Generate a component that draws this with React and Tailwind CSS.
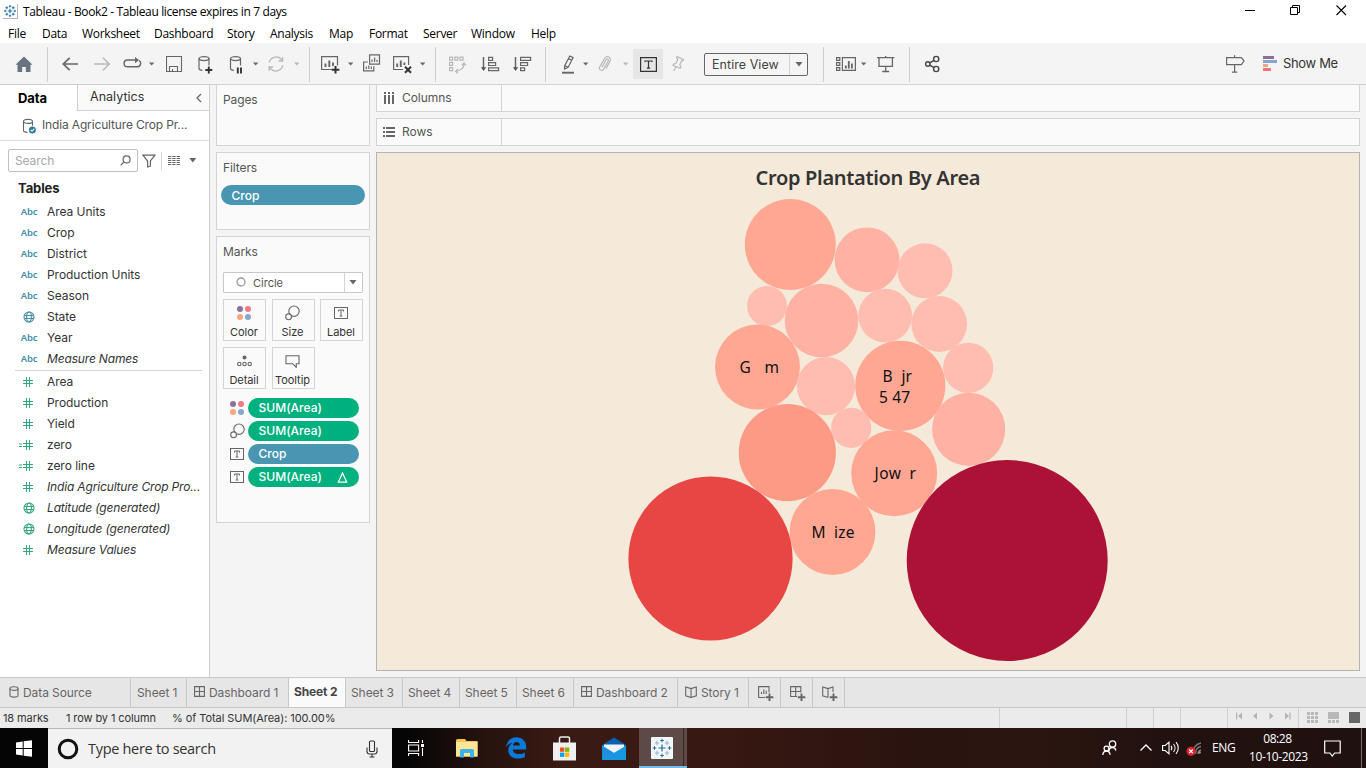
import React from "react";

const ui = "font-['Inter',sans-serif]";
const sys = "font-['Open_Sans',sans-serif]";

/* ---------- shared pieces ---------- */

function Icon({ w, h = 20, children, className = "", ...rest }) {
  return (
    <svg width={w} height={h} viewBox={`0 0 ${w} ${h}`} fill="none" stroke="#666" strokeWidth="1.2" className={`block shrink-0 ${className}`} {...rest}>
      {children}
    </svg>
  );
}

function Slot({ w, children }) {
  return <div className={`flex shrink-0 items-center ${w}`}>{children}</div>;
}

const Sep = ({ w }) => (
  <Slot w={w}>
    <div className="h-[35px] w-px bg-[#cfcfcf]" />
  </Slot>
);

const Caret = ({ w, light }) => (
  <Slot w={w}>
    <Icon w={6} h={4} stroke="none">
      <path d="M0 0.5h5.4L2.7 3.5z" fill={light ? "#b8b8b8" : "#666"} />
    </Icon>
  </Slot>
);

function TableauMark({ size, main = "#1f6f97", soft = "#5d9cc0", weight = 1 }) {
  const plus = (x, y, r, c, sw) => <path key={`${x}-${y}`} d={`M${x - r} ${y}h${2 * r}M${x} ${y - r}v${2 * r}`} stroke={c} strokeWidth={sw * weight} />;
  return (
    <svg width={size} height={size} viewBox="0 0 22 22" fill="none" className="block shrink-0">
      {plus(11, 11, 3.6, main, 1.2)}
      {plus(6, 6, 2.2, soft, 1.1)}
      {plus(16, 6, 2.2, soft, 1.1)}
      {plus(6, 16, 2.2, soft, 1.1)}
      {plus(16, 16, 2.2, soft, 1.1)}
      {plus(11, 3.5, 1.8, main, 1)}
      {plus(11, 18.5, 1.8, main, 1)}
      {plus(3.5, 11, 1.8, main, 1)}
      {plus(18.5, 11, 1.8, main, 1)}
    </svg>
  );
}

function LabelIcon({ w = 14, h = 12, stroke = "#666" }) {
  const c = w / 2;
  return (
    <svg width={w} height={h} viewBox={`0 0 ${w} ${h}`} fill="none" stroke={stroke} className="block shrink-0">
      <rect x="0.5" y="0.5" width={w - 1} height={h - 1} />
      <path d={`M${c - 2.5} 4.5v-1.5h5v1.5M${c} 3v${h - 6}M${c - 1.3} ${h - 3}h2.6`} />
    </svg>
  );
}

function ColorIcon() {
  return (
    <svg width="14" height="14" viewBox="0 0 14 14" className="block shrink-0">
      <circle cx="3" cy="3" r="3" fill="#8c7299" />
      <circle cx="11" cy="3" r="3" fill="#fa7787" />
      <circle cx="3" cy="11" r="3" fill="#f6a77c" />
      <circle cx="11" cy="11" r="3" fill="#84a6cf" />
    </svg>
  );
}

const SizeIcon = () => (
  <Icon w={15} h={16} stroke="#666" strokeWidth="1.1">
    <circle cx="9" cy="6.2" r="5.2" />
    <circle cx="3.6" cy="11.8" r="2.9" fill="#fafafa" />
  </Icon>
);

/* ---------- window chrome ---------- */

function TitleBar() {
  return (
    <div className={`flex h-[23px] items-center bg-white text-black ${sys}`}>
      <div className="ml-[3px] flex h-[15px] w-[15px] items-center justify-center border-r border-b border-[#b5b5b5]">
        <TableauMark size={14} main="#1f6f9c" soft="#1f6f9c" weight={1.5} />
      </div>
      <span className="ml-[5px] text-[12px] tracking-[-0.36px] whitespace-pre">Tableau - Book2 - Tableau license expires in 7 days</span>
      <div className="mb-[3px] ml-auto flex items-center">
        <Icon w={45} h={20} stroke="#000" strokeWidth="1"><path d="M0 10.5h10" /></Icon>
        <Icon w={46} h={20} stroke="#000" strokeWidth="1"><path d="M.5 7.5h7v7h-7zM2.500 7.500v-2h7v7h-2" /></Icon>
        <Icon w={30} h={20} stroke="#000" strokeWidth="1.1"><path d="M.5 5.5l9.5 9.5M10 5.5L.5 15" /></Icon>
      </div>
    </div>
  );
}

const MENU = [
  ["File", "w-[34px]"], ["Data", "w-[40px]"], ["Worksheet", "w-[72px]"], ["Dashboard", "w-[73px]"], ["Story", "w-[43px]"],
  ["Analysis", "w-[59px]"], ["Map", "w-[40px]"], ["Format", "w-[54px]"], ["Server", "w-[48px]"], ["Window", "w-[60px]"], ["Help", "w-[40px]"],
];

function MenuBar() {
  return (
    <div className={`flex h-5 items-center bg-white pt-0.5 pl-2 text-[12px] tracking-[-0.28px] text-black ${sys}`}>
      {MENU.map(([t, w]) => <div key={t} className={`shrink-0 ${w}`}>{t}</div>)}
    </div>
  );
}

function Toolbar() {
  return (
    <div className="flex h-[42px] items-center border-b border-[#cfcfcf] bg-[#f4f4f4] pt-px pl-[15px]">
      <Slot w="w-8">
        <Icon w={18} stroke="none"><path d="M9 2.5L.5 10.8h2V18h4.7v-5h3.6v5h4.7v-7.2h2z" fill="#68737f" /></Icon>
      </Slot>
      <Sep w="w-[15px]" />
      <Slot w="w-8"><Icon w={17} strokeWidth="1.7"><path d="M16 10H1.3M7.7 3.8L1.3 10l6.4 6.2" /></Icon></Slot>
      <Slot w="w-[29px]"><Icon w={17} stroke="#b8b8b8" strokeWidth="1.6"><path d="M0 10h15.2M9 3.8l6.3 6.2L9 16.2" /></Icon></Slot>
      <Slot w="w-[26px]">
        <Icon w={19} strokeWidth="1.4"><path d="M8 6H4.500a3.400 3.400 0 0 0 0 6.800h9.500c4 0 4.800-4.800 2-6.200M5 6h8" /><path d="M12 3l4 3-4 3.200z" fill="#666" stroke="none" /></Icon>
      </Slot>
      <Caret w="w-[17px]" />
      <Slot w="w-[31px]"><Icon w={17} strokeWidth="1.1"><path d="M.5 2.5h15v15H.5zM3.5 17.5v-5h8v5M6.5 17.5v-2.5" /></Icon></Slot>
      <Slot w="w-8">
        <Icon w={18}>
          <ellipse cx="7" cy="4.6" rx="5" ry="2" /><path d="M2 4.6v9.8c0 1.1 1.4 1.7 3.4 1.9M12 4.6v7" />
          <path d="M11.8 12.5v7M8.3 16h7" stroke="#333" strokeWidth="1.9" />
        </Icon>
      </Slot>
      <Slot w="w-6">
        <Icon w={18}>
          <ellipse cx="6.5" cy="4.6" rx="5" ry="2" /><path d="M1.5 4.6v9.8c0 1.1 1.4 1.7 3.4 1.9M11.5 4.6v7" />
          <path d="M8.8 13.5v6M12 13.5v6" stroke="#333" strokeWidth="1.9" />
        </Icon>
      </Slot>
      <Caret w="w-[14px]" />
      <Slot w="w-[27px]">
        <Icon w={18} stroke="#b8b8b8" strokeWidth="1.3">
          <path d="M2.2 8.6A7 7 0 0 1 14 5l1.4 1.8M15.8 11.2A7 7 0 0 1 4 15l-1.5-1.8M15.6 3v4h-4M2.2 17v-4h4" />
        </Icon>
      </Slot>
      <Caret w="w-[15px]" light />
      <Sep w="w-3" />
      <Slot w="w-[27px]">
        <Icon w={20}>
          <path d="M11 15.5H.6V2.6h15.9v9" /><path d="M4.5 13V9.5M8.3 13V6.5M12 12V8.5" strokeWidth="1.9" />
          <path d="M14.5 12v7.4M10.8 15.7h7.6" stroke="#333" strokeWidth="2" />
        </Icon>
      </Slot>
      <Caret w="w-[15px]" />
      <Slot w="w-[30px]">
        <Icon w={18}>
          <path d="M6.6.8h9.9v9.4H6.6z M4.8 8H.6v8.8h10.2v-4.6" /><path d="M9 8V5.5M11.6 8V3.5M14 8V5.8M3.3 15v-2.5M5.8 15v-3.5M8.3 15v-2.5" />
        </Icon>
      </Slot>
      <Slot w="w-[27px]">
        <Icon w={20}>
          <path d="M10 15.5H.6V2.6h15v8.5" /><path d="M4.2 13V9.5M7.8 13V6.5M11.4 11V8.5" strokeWidth="1.9" />
          <path d="M12 12.7l6 6M18 12.7l-6 6" stroke="#333" strokeWidth="2" />
        </Icon>
      </Slot>
      <Caret w="w-[15px]" />
      <Sep w="w-[14px]" />
      <Slot w="w-8">
        <Icon w={18} stroke="#b8b8b8">
          <path d="M.6 3.2h3v3h-3zM5.8 3.2h3v3h-3zM11 3.2h3v3h-3zM.6 8.4h3v3h-3zM.6 13.6h3v3h-3zM15 9.5c.2 4-2.8 7.2-8 7.8M12.8 11.5L15 9l2 2.5M9 15l-2.5 2.4L9 19.3" />
        </Icon>
      </Slot>
      <Slot w="w-8">
        <Icon w={19}><path d="M2.5 3v12" strokeWidth="1.5" /><path d="M0 13.2h5.2L2.6 17z" fill="#555" stroke="none" /><path d="M7.6 3.4h4v2.9h-4zM7.6 8.6h7v2.9h-7zM7.6 13.8h10v2.9h-10z" /></Icon>
      </Slot>
      <Slot w="w-8">
        <Icon w={19}><path d="M2.5 3v12" strokeWidth="1.5" /><path d="M0 13.2h5.2L2.6 17z" fill="#555" stroke="none" /><path d="M7.6 3.4h10v2.9h-10zM7.6 8.6h7v2.9h-7zM7.6 13.8h4v2.9h-4z" /></Icon>
      </Slot>
      <Sep w="w-4" />
      <Slot w="w-[22px]">
        <Icon w={14}><path d="M8.8 2l3.3 1.6-5 9.8-3.6 1.6.2-3.4zM7.5 4.5l3.2 1.7M3.8 11.4l3.2 1.8" /><path d="M1 18.7h12" strokeWidth="1.9" /></Icon>
      </Slot>
      <Caret w="w-[15px]" />
      <Slot w="w-[25px]">
        <Icon w={16} stroke="#b8b8b8"><path d="M4.8 12.8l4-7.3c.8-1.5 3-.6 2.3 1l-4.6 8.3c-1.6 2.7-5.3.6-4-2.1L7.5 4c2-3.4 7.2-1 5.3 2.8l-4 7.5" transform="translate(-.8 .3)" /></Icon>
      </Slot>
      <Caret w="w-[10px]" light />
      <Slot w="w-[38px]">
        <div className="flex h-[30px] w-[30px] items-center justify-center bg-[#e6e6e6]">
          <Icon w={17} h={15} stroke="#333"><path d="M.6.6h15.8v13.8H.6z" /><path d="M5 5V4h7v1M8.5 4v7.2M6.8 11.2h3.4" /></Icon>
        </div>
      </Slot>
      <Slot w="w-[33px]">
        <Icon w={15} stroke="#b8b8b8"><path d="M6 2.5l6.5 3-.4 1.2-1.3-.2-2 4.2 1 2.4-.5 1.2L2 11.5l.5-1.2 2.4-.8 2-4.3-1.1-1.2zM5 13L2.7 17" /></Icon>
      </Slot>
      <Slot w="w-[119px]">
        <div className={`flex h-[23px] w-[104px] rounded-[2px] border border-[#666] bg-[#f5f5f5] ${ui}`}>
          <div className="flex-1 pl-[7px] text-[12.5px] leading-[21px] tracking-[0.05px] whitespace-nowrap text-[#444]">Entire View</div>
          <div className="flex w-[18px] items-center justify-center border-l border-[#d4d4d4]">
            <Icon w={8} h={5} stroke="none"><path d="M0.5 0h7L4 4.5z" fill="#666" /></Icon>
          </div>
        </div>
      </Slot>
      <Sep w="w-[13px]" />
      <Slot w="w-[25px]">
        <Icon w={21}><path d="M.6 3.6h3.2v2.8H.6zM.6 8.6h3.2v2.8H.6zM.6 13.6h3.2v2.8H.6zM6.4 3.6h13v12.8h-13z" /><path d="M9.8 14.5v-3M12.8 14.5V7M15.9 14.5V9.5" strokeWidth="1.8" /></Icon>
      </Slot>
      <Caret w="w-4" />
      <Slot w="w-8"><Icon w={18}><path d="M0 3.6h17.4M2 3.6v8.8h13.4V3.6M8.7 2v1.5M8.7 12.5v5M5.2 17.5h7" strokeWidth="1.3" /></Icon></Slot>
      <Sep w="w-4" />
      <Icon w={15} stroke="#444" strokeWidth="1.4"><circle cx="2.8" cy="10" r="2.2" /><circle cx="11.2" cy="5" r="2.6" /><circle cx="11.2" cy="15" r="2.6" /><path d="M4.8 8.9L9 6.3M4.8 11.2L9 13.7" /></Icon>
      <div className="ml-auto flex items-center">
        <Slot w="w-[37px]"><Icon w={19}><path d="M.6 3.6h14.8l2.6 3.5-2.6 3.5H.6zM8.6 1.2v2.4M8.6 10.6v7.6M6 18.2h5.2" /></Icon></Slot>
        <Slot w="w-5">
          <Icon w={15} h={16} stroke="none"><path d="M0 0h11v3H0z" fill="#8a7099" /><path d="M0 4h14v3H0z" fill="#83a5ce" /><path d="M0 8h5v3H0z" fill="#f3a77e" /><path d="M0 12h8v3H0z" fill="#fa7284" /></Icon>
        </Slot>
        <div className={`w-[83px] text-[13px] tracking-[-0.35px] whitespace-nowrap text-[#333] ${ui}`}>Show Me</div>
      </div>
    </div>
  );
}

/* ---------- data pane ---------- */

const Abc = () => <span className="pt-0.5 text-[9.5px] font-semibold tracking-[-0.15px] text-[#4690a9] font-['Noto_Sans',sans-serif]">Abc</span>;

const Globe = ({ color }) => (
  <Icon w={12} h={12} stroke={color} strokeWidth="1.1" className="-ml-px"><circle cx="6" cy="6" r="5" /><ellipse cx="6" cy="6" rx="2.4" ry="5" /><path d="M1.500 4.500h9M1.500 7.500h9" /></Icon>
);

const Hash = ({ calc }) => (
  <Icon w={15} h={12} stroke="#34a77f" strokeWidth="1.1" className="-ml-[5px]">
    <path d="M7.5 1v10M10.500 1v10M4 4.500h10M4 7.500h10" />
    {calc && <path d="M0 5h3M0 7.5h3" />}
  </Icon>
);

const DIMENSIONS = [["Area Units"], ["Crop"], ["District"], ["Production Units"], ["Season"], ["State", "geo"], ["Year"], ["Measure Names", "abc", true]];
const MEASURES = [["Area"], ["Production"], ["Yield"], ["zero", "calc"], ["zero line", "calc"], ["India Agriculture Crop Pro...", "", true], ["Latitude (generated)", "geo", true], ["Longitude (generated)", "geo", true], ["Measure Values", "", true]];

function Field({ name, icon, italic }) {
  return (
    <div className="flex h-[21px] items-center">
      <div className="flex w-[58px] shrink-0 justify-center">{icon}</div>
      <span className={`-ml-[11px] text-[12px] whitespace-nowrap text-[#333] ${italic ? "tracking-[-0.16px] italic" : "tracking-[-0.04px]"}`}>{name}</span>
    </div>
  );
}

function DataPane() {
  return (
    <div className={`flex w-[210px] shrink-0 flex-col border-r border-[#cfcfcf] bg-white ${ui}`}>
      <div className="flex h-[26px]">
        <div className="w-[77px] pl-[18px] text-[13px] leading-[26px] font-bold tracking-[-0.1px] text-black">Data</div>
        <div className="flex flex-1 items-center border-b border-l border-[#cfcfcf] bg-[#fafafa] pl-3">
          <span className="text-[12.5px] tracking-[0.02px] text-[#333]">Analytics</span>
          <Icon w={6} h={10} className="mr-[7px] ml-auto" strokeWidth="1.3"><path d="M5 1L1 5l4 4" /></Icon>
        </div>
      </div>
      <div className="flex h-[30px] items-center border-b border-[#dcdcdc] pl-[22px]">
        <Icon w={15} h={16} strokeWidth="1.1">
          <ellipse cx="6" cy="3.4" rx="4.5" ry="2" /><path d="M1.5 3.4v9.2c0 1 1.4 1.7 4 1.8M10.5 3.4v4.4" />
          <circle cx="10.4" cy="12" r="3.5" fill="#2f7d9d" stroke="none" /><path d="M8.7 12l1.3 1.3 2.2-2.4" stroke="#fff" />
        </Icon>
        <span className="ml-[5px] pb-px text-[12px] tracking-[-0.15px] whitespace-nowrap text-[#555]">India Agriculture Crop Pr...</span>
      </div>
      <div className="mt-2 flex h-[23px] items-center pl-2">
        <div className="flex h-[23px] w-[130px] items-center rounded-[2px] border border-[#c0c0c0] pr-1.5 pl-1.5">
          <span className="text-[12px] tracking-[-0.1px] text-[#a8a8a8]">Search</span>
          <Icon w={11} h={11} className="ml-auto" strokeWidth="1.2"><circle cx="6.6" cy="4.4" r="3.5" /><path d="M4 7L.6 10.4" /></Icon>
        </div>
        <Icon w={14} h={14} className="ml-1" strokeWidth="1.2"><path d="M.9 1.2h12L8.4 7v5l-2.8 1V7z" /></Icon>
        <div className="ml-[5px] h-[18px] w-px bg-[#d4d4d4]" />
        <Icon w={12} h={11} className="ml-[6px]" strokeWidth="1"><path d="M0 1.500h12M0 3.500h12M0 5.500h12M0 7.500h12M0 9.500h12" strokeDasharray="3.300 1" /></Icon>
        <Icon w={8} h={5} className="ml-[9px]" stroke="none"><path d="M.3 0h7L3.8 4.6z" fill="#666" /></Icon>
      </div>
      <div className="mt-[7px] h-[22px] pl-[18px] text-[13px] leading-[18px] font-bold tracking-[-0.1px] text-[#222]">Tables</div>
      {DIMENSIONS.map(([n, k, it]) => <Field key={n} name={n} italic={it} icon={k === "geo" ? <Globe color="#4690a9" /> : <Abc />} />)}
      <div className="mt-px mr-[7px] ml-[15px] h-px shrink-0 bg-[#d4d4d4]" />
      {MEASURES.map(([n, k, it]) => <Field key={n} name={n} italic={it} icon={k === "geo" ? <Globe color="#34a77f" /> : <Hash calc={k === "calc"} />} />)}
    </div>
  );
}

/* ---------- cards and shelves ---------- */

const CARD = "border border-[#d4d4d4] bg-[#fafafa]";

function Pill({ label, color, w, delta }) {
  return (
    <div className={`flex h-5 items-center rounded-full pl-[10.5px] text-[12px] font-medium tracking-[0.02px] text-white ${color} ${w}`}>
      {label}
      {delta && <Icon w={11} h={11} stroke="#fff" className="mr-[11px] ml-auto"><path d="M5.5 1L1.300 10.200h8.400z" /></Icon>}
    </div>
  );
}

function MarkButton({ label, icon }) {
  return (
    <div className="flex h-[42px] w-[43px] flex-col items-center border border-[#d4d4d4] pt-[5px] pr-px text-[11px] text-[#333]">
      <div className="flex h-4 items-center">{icon}</div>
      <div className="mt-[3px] leading-4 tracking-[-0.05px] whitespace-nowrap">{label}</div>
    </div>
  );
}

function Cards() {
  return (
    <div className={`flex w-[154px] shrink-0 flex-col gap-1.5 text-[12px] text-[#555] ${ui}`}>
      <div className={`h-[62px] pt-1.5 pl-1.5 leading-[17px] tracking-[-0.1px] ${CARD}`}>Pages</div>
      <div className={`h-[78px] pt-1.5 leading-[17px] ${CARD}`}>
        <div className="pl-1.5 tracking-[-0.1px]">Filters</div>
        <div className="mt-[9px] pl-1"><Pill label="Crop" color="bg-[#4996b2]" w="w-36" /></div>
      </div>
      <div className={`h-[287px] pt-1.5 ${CARD}`}>
        <div className="pl-1.5 leading-[17px] tracking-[-0.1px]">Marks</div>
        <div className="mt-3 ml-1.5 flex h-[21px] w-[140px] rounded-[1px] border border-[#c8c8c8] bg-white">
          <Icon w={10} h={10} stroke="#999" className="mt-1 ml-3" strokeWidth="1.3"><circle cx="5" cy="5" r="4" /></Icon>
          <span className="ml-[7px] text-[11px] leading-[20px]">Circle</span>
          <div className="ml-auto flex w-[18px] items-center justify-center border-l border-[#d4d4d4] pr-px">
            <Icon w={8} h={5} stroke="none"><path d="M.5 0h7L4 4.5z" fill="#666" /></Icon>
          </div>
        </div>
        <div className="mt-1.5 ml-1.5 grid w-[140px] grid-cols-3 gap-x-[5.5px] gap-y-1.5">
          <MarkButton label="Color" icon={<ColorIcon />} />
          <MarkButton label="Size" icon={<SizeIcon />} />
          <MarkButton label="Label" icon={<LabelIcon />} />
          <MarkButton label="Detail" icon={<Icon w={15} h={12} strokeWidth="1.1"><circle cx="7.5" cy="2.5" r="2" fill="#666" stroke="none" /><circle cx="2.3" cy="9" r="1.7" /><circle cx="7.5" cy="9" r="1.7" /><circle cx="12.7" cy="9" r="1.7" /></Icon>} />
          <MarkButton label="Tooltip" icon={<Icon w={15} h={13} strokeWidth="1.1"><path d="M1 .7h13v8h-2.8v3.6L7.6 8.7H1z" /></Icon>} />
        </div>
        <div className="mt-[9px] ml-3 flex flex-col gap-[3px]">
          {[[<ColorIcon key="c" />, "SUM(Area)", "bg-[#00b180]"], [<SizeIcon key="s" />, "SUM(Area)", "bg-[#00b180]"], [<LabelIcon key="l" />, "Crop", "bg-[#4996b2]"], [<LabelIcon key="t" />, "SUM(Area)", "bg-[#00b180]", true]].map(([icon, label, color, delta], i) => (
            <div key={i} className="flex h-5 items-center">
              <div className="flex w-[19px] items-center pl-px">{icon}</div>
              <Pill label={label} color={color} w="w-[111px]" delta={delta} />
            </div>
          ))}
        </div>
      </div>
    </div>
  );
}

function Shelf({ label, icon }) {
  return (
    <div className={`flex h-7 shrink-0 text-[12px] text-[#555] ${ui} ${CARD}`}>
      <div className="flex w-[125px] items-center border-r border-[#d4d4d4] pl-1.5">
        {icon}
        <span className="ml-[7px] tracking-[-0.05px]">{label}</span>
      </div>
    </div>
  );
}

const BUBBLES = [
  [790.3, 244.5, 45.5, "#ffa793"], [867, 259.8, 32.4, "#ffb1a3"], [925, 270.8, 27.5, "#ffbdb1"], [767, 306, 20, "#ffbdb1"],
  [821.5, 320.5, 36.8, "#ffb1a3"], [885.2, 315.7, 26.9, "#ffbdb1"], [939.2, 324, 27.9, "#ffbdb1"], [757.5, 367, 42.5, "#ffa793"],
  [826, 386.2, 29.1, "#ffbdb1"], [900.3, 385.8, 45.1, "#ffa793"], [968.2, 367.8, 25.1, "#ffbdb1"], [968.7, 429.3, 36.6, "#ffb1a3"],
  [851.2, 427.8, 20.1, "#ffbdb1"], [787.3, 452.7, 48.6, "#fc9a85"], [894.2, 473.3, 43, "#ffa793"], [832.5, 532, 42.9, "#ffa793"],
  [710.5, 558.5, 82.1, "#e84545"], [1007.2, 560.5, 100.5, "#ac1137"],
];

const LABELS = [
  [739.5, 373, "G", 10], [764.5, 373, "m", 14], [882.5, 382, "B", 9.5], [901.5, 382, "jr", 10.5], [879, 403, "5 47", 31],
  [874.5, 479, "Jow", 26.5], [909.5, 479, "r", 6.5], [811.5, 538, "M", 14], [834, 538, "ize", 20.5],
];

function View() {
  return (
    <div className="flex-1 border border-[#b3b3b3] bg-[#f5ead9]">
      <svg width="982" height="517" viewBox="377 153 982 517" className="block font-['Noto_Sans',sans-serif]">
        <text x="755.5" y="185" fontSize="20" fontWeight="600" fill="#333" textLength="225">Crop Plantation By Area</text>
        {BUBBLES.map(([x, y, r, c], i) => <circle key={i} cx={x} cy={y} r={r} fill={c} />)}
        {LABELS.map(([x, y, t, w]) => <text key={`${x}${y}`} x={x} y={y} fontSize="15.5" fill="#111" textLength={w}>{t}</text>)}
      </svg>
    </div>
  );
}

/* ---------- sheet tabs and status ---------- */

const GridIcon = ({ plus }) => (
  <Icon w={plus ? 16 : 11} h={plus ? 16 : 11} strokeWidth="1.1">
    <path d={plus ? "M7 10.5H.6V.6h10.2v6M5.7.6v9.9M.6 5.5h10.2" : "M.6.6h9.8v9.8H.6zM5.5.6v9.8M.6 5.5h9.8"} />
    {plus && <path d="M11.5 7.5v7.6M7.7 11.3h7.6" strokeWidth="1.9" />}
  </Icon>
);

const StoryIcon = ({ plus }) => (
  <Icon w={plus ? 16 : 12} h={plus ? 16 : 12} strokeWidth="1.1">
    <path d={plus ? "M6 11.5L.7 9.8V1L6 2.6 11 1v5M6 2.6v9" : "M6 11.5L.7 9.8V1L6 2.6 11.3 1v8.8zM6 2.6v9"} />
    {plus && <path d="M11.5 7.5v7.6M7.7 11.3h7.6" strokeWidth="1.9" />}
  </Icon>
);

const TABS = [
  ["Data Source", "w-[131px] pl-[9px]", <Icon key="i" w={10} h={12} strokeWidth="1.1"><ellipse cx="5" cy="2.6" rx="4" ry="1.8" /><path d="M1 2.6v7c0 2 8 2 8 0v-7" /></Icon>],
  ["Sheet 1", "w-[56px] pl-1.5"],
  ["Dashboard 1", "w-[102px] pl-[7px]", <GridIcon key="i" />],
  ["Sheet 2", "w-[57px] pl-[5px]", null, true],
  ["Sheet 3", "w-[57px] pl-[5px]"],
  ["Sheet 4", "w-[57px] pl-[5px]"],
  ["Sheet 5", "w-[57px] pl-[5px]"],
  ["Sheet 6", "w-[57px] pl-[5px]"],
  ["Dashboard 2", "w-[104px] pl-[7px]", <GridIcon key="i" />],
  ["Story 1", "w-[71px] pl-[7px]", <StoryIcon key="i" />],
];

function SheetTabs() {
  return (
    <div className={`flex h-[31px] border-y border-[#c8c8c8] bg-[#e6e6e6] text-[12px] text-[#666] ${ui}`}>
      {TABS.map(([t, w, icon, active]) => (
        <div key={t} className={`flex shrink-0 items-center border-r border-[#c8c8c8] whitespace-nowrap ${w} ${icon ? "gap-1" : ""} ${active ? "bg-[#fafafa] pb-px font-bold tracking-[-0.15px] text-[#444]" : "tracking-[-0.08px]"}`}>
          {icon && <span className="pb-0.5">{icon}</span>}<span>{t}</span>
        </div>
      ))}
      <div className="flex w-8 items-center border-r border-[#c8c8c8] pt-[3px] pl-[9px]">
        <Icon w={16} h={16} strokeWidth="1.1"><path d="M7 11.5H.6V.6h10.4v6M3.5 8V6M5.8 8V3.5M8.2 8V4.8" /><path d="M11.5 7.5v7.6M7.7 11.3h7.6" strokeWidth="1.9" /></Icon>
      </div>
      <div className="flex w-8 items-center border-r border-[#c8c8c8] pt-[3px] pl-[9px]"><GridIcon plus /></div>
      <div className="flex w-8 items-center border-r border-[#c8c8c8] pt-[3px] pl-[9px]"><StoryIcon plus /></div>
    </div>
  );
}

function StatusBar() {
  return (
    <div className={`flex h-5 items-center bg-[#ebebeb] pl-[3px] text-[11px] tracking-[-0.1px] text-[#333] ${ui}`}>
      <span className="w-[63px] whitespace-nowrap">18 marks</span>
      <span className="w-[106px] whitespace-nowrap">1 row by 1 column</span>
      <span className="tracking-[-0.07px] whitespace-nowrap">% of Total SUM(Area): 100.00%</span>
      <div className="ml-auto flex h-full">
        <div className="w-[127px] border-l border-[#cfcfcf]" />
        <div className="w-[27px] border-l border-[#cfcfcf]" />
        <div className="w-[27px] border-l border-[#cfcfcf]" />
        <div className="w-[47px] border-l border-[#cfcfcf]" />
        <div className="flex w-[71px] items-center border-l border-[#cfcfcf] pb-1 pl-2">
          <Icon w={56} h={8} stroke="none"><path d="M0 .5h1.2v7H0zM6 .5v7L2 4zM21 .5v7L17 4zM33.5 .5v7L37.5 4zM49 .5v7L53 4zM53.4 .5h1.2v7h-1.2z" fill="#b3b3b3" /></Icon>
        </div>
        <div className="flex w-[68px] items-center gap-[10px] border-l border-[#cfcfcf] pb-px pl-2">
          <Icon w={11} h={11} stroke="none"><path d="M0 0h3v3H0zM4 0h3v3H4zM8 0h3v3H8zM0 4h3v3H0zM4 4h3v3H4zM8 4h3v3H8zM0 8h3v3H0zM4 8h3v3H4zM8 8h3v3H8z" fill="#b8b8b8" /></Icon>
          <Icon w={11} h={11} stroke="none"><path d="M0 0h11v7H0zM0 8h3v3H0zM4 8h3v3H4zM8 8h3v3H8z" fill="#b8b8b8" /></Icon>
          <div className="h-[11px] w-[11px] bg-[#666]" />
        </div>
      </div>
    </div>
  );
}

/* ---------- windows taskbar ---------- */

function Taskbar() {
  return (
    <div className={`flex h-10 items-center bg-[linear-gradient(90deg,#050505_0%,#050505_30%,#24120e_35%,#391a14_41%,#381812_52%,#2b1410_66%,#2a1510_76%,#22120f_85%,#1f110f_100%)] text-white ${sys}`}>
      <div className="flex w-12 justify-center">
        <Icon w={16} h={17} stroke="none"><path d="M0 2.5L6.7 1.5V8H0zM7.7 1.35L16 .2V8H7.7zM0 9h6.7v6.5L0 14.5zM7.7 9H16v7.8L7.7 15.65z" fill="#fff" /></Icon>
      </div>
      <div className="flex h-10 w-[344px] items-center border-t border-[#b8b8b8] bg-[#f2f2f2] pl-[9px]">
        <Icon w={22} h={22} stroke="#111" strokeWidth="3"><circle cx="11" cy="11" r="8.8" /></Icon>
        <span className="ml-[9px] text-[14.5px] tracking-[-0.3px] whitespace-nowrap text-[#333]">Type here to search</span>
        <Icon w={12} h={18} stroke="#333" className="mr-[14px] ml-auto" strokeWidth="1.1"><rect x="3.5" y="1" width="5" height="10.5" rx="1" /><path d="M1 7.5v4c0 1.5 1 2.5 2.5 2.5h5c1.5 0 2.5-1 2.5-2.5v-4M6 14v3M3.5 17h5" /></Icon>
      </div>
      <div className="flex w-[63px] pl-4">
        <Icon w={17} h={16} stroke="#fff" strokeWidth="1.1"><path d="M.6 0v2.5h10V0M.6 16v-2.5h10V16M.6 5h10v6H.6zM14.5 0v3M14.5 8v8" /><path d="M13 4h3v3h-3z" fill="#fff" stroke="none" /></Icon>
      </div>
      <div className="flex w-[50px]">
        <svg width="23" height="20" viewBox="0 0 23 20" className="block">
          <path d="M1 2.5Q1 1 2.5 1H10l1.5 2H22.5V18.5H1z" fill="#f4c64d" />
          <path d="M1 4h21.5v14.5H1z" fill="#ffe694" />
          <path d="M5 19.5V12.5Q5 11 6.5 11h11q1.5 0 1.5 1.5v7h-4V15H9v4.5z" fill="#3bb4e9" />
        </svg>
      </div>
      <div className="flex w-12">
        <svg width="22" height="22" viewBox="0 0 22 22" className="block">
          <path d="M1 10.5C2 4 6 .3 11.3 .3c6 0 9.9 4 9.9 9.7v2.4H7.8c.2 3.2 3 4.6 6.1 4.6 2.3 0 4.2-.6 6-1.6v4.5c-2 1.1-4.4 1.7-7 1.7C7 21.6 3.3 18.2 3.3 13.3c0-3.3 1.6-5.9 4.5-7.5C5 6 2.6 7.8 1 10.5zM8 8.6h6.9c0-2.3-1.2-3.6-3.3-3.6-2 0-3.4 1.4-3.6 3.6z" fill="#0b79d7" />
        </svg>
      </div>
      <div className="flex w-[49px]">
        <svg width="23" height="25" viewBox="0 0 23 25" className="block">
          <path d="M6.5 8V2.5Q6.500 1 8 1h7q1.5 0 1.5 1.5V8" fill="none" stroke="#eee" strokeWidth="1.5" />
          <path d="M0 6.5h23v18H0z" fill="#f0f0f0" />
          <path d="M7 11.5h4.3v4.3H7z" fill="#f25022" /><path d="M12 11.5h4.3v4.3H12z" fill="#7fba00" />
          <path d="M7 16.6h4.3v4.3H7z" fill="#00a4ef" /><path d="M12 16.6h4.3v4.3H12z" fill="#ffb900" />
        </svg>
      </div>
      <div className="flex w-[37px]">
        <svg width="24" height="23" viewBox="0 0 24 23" className="block">
          <path d="M0 8L12 .5 24 8v2H0z" fill="#0a5fb4" /><path d="M2 7.5h20V16H2z" fill="#f2f2f2" />
          <path d="M0 8.5l12 7.5 12-7.5V23H0z" fill="#2fb9ee" /><path d="M0 23L24 9v14z" fill="#1697df" /><path d="M0 8.5L12 16 0 23z" fill="#1d8fdd" />
        </svg>
      </div>
      <div className="flex h-10 w-12 border-b-2 border-[#76b9ed] bg-[#5d4a46]">
        <div className="flex w-[45px] items-center justify-center border-r border-[#352420] pt-0.5 pl-0.5">
          <div className="rounded-[1px] bg-[#f4f6f8]"><TableauMark size={22} soft="#8bb8d2" /></div>
        </div>
      </div>
      <div className="ml-auto flex h-full items-center">
        <Icon w={42} h={18} stroke="#fff" strokeWidth="1.3"><circle cx="10.5" cy="5" r="3.2" /><path d="M7 12c0-2 1.5-3.5 3.5-3.5 1.7 0 3 1 3.4 3" /><circle cx="4.5" cy="9.5" r="2.4" /><path d="M.8 16c.2-2.5 1.7-4 3.7-4s3.3 1.3 3.6 3.8" /></Icon>
        <Icon w={22} h={12} stroke="#fff" strokeWidth="1.3" className="-ml-1"><path d="M.5 8.5L6 3l5.5 5.5" /></Icon>
        <Icon w={24} h={16} stroke="#fff" strokeWidth="1.1"><path d="M.6 5.5h2.6L7 2.2v11.6L3.2 10.5H.6zM9 5.8c1 1.3 1 3.1 0 4.4M11.5 4c2 2.3 2 5.7 0 8M14 2.2c3 3.3 3 8.3 0 11.6" /></Icon>
        <svg width="26" height="20" viewBox="0 0 26 20" fill="none" className="block">
          <path d="M7 16C7 10 10 6 15 5M9.5 16c0-4 2-7 5.5-7.5M12 16c0-2 1-3.5 3-4" stroke="#777" strokeWidth="1.3" />
          <circle cx="13.5" cy="14.5" r="1.3" fill="#999" />
          <circle cx="5" cy="13.3" r="4.6" fill="#e0202c" /><path d="M3.2 11.5l3.6 3.6M6.8 11.5l-3.6 3.6" stroke="#fff" strokeWidth="1.3" />
        </svg>
        <span className="w-[37px] text-[12px] tracking-[-0.3px]">ENG</span>
        <div className="w-[57px] text-center text-[12px] leading-[18px] tracking-[-0.4px] whitespace-nowrap"><div>08:28</div><div>10-10-2023</div></div>
        <Icon w={17} h={17} stroke="#fff" className="ml-[18px]" strokeWidth="1.2"><path d="M.7 1h15.5v12h-5.5l-2.4 3-2.4-3H.7z" /></Icon>
        <div className="ml-5 h-full w-px bg-[#776b68]" />
        <div className="w-1" />
      </div>
    </div>
  );
}

export default function App() {
  return (
    <div className="flex h-[768px] w-[1366px] flex-col overflow-hidden bg-[#f4f4f4]">
      <TitleBar />
      <MenuBar />
      <Toolbar />
      <div className="flex h-[592px] shrink-0">
        <DataPane />
        <div className="flex flex-1 gap-1.5 pr-1.5 pb-1.5 pl-1.5">
          <div className="-mt-px flex">
            <Cards />
          </div>
          <div className="-mt-px flex flex-1 flex-col gap-1.5">
            <Shelf label="Columns" icon={<Icon w={12} h={12} stroke="none"><path d="M1 0h2v2H1zM1 3h2v9H1zM5 0h2v2H5zM5 3h2v9H5zM9 0h2v2H9zM9 3h2v9H9z" fill="#666" /></Icon>} />
            <Shelf label="Rows" icon={<Icon w={12} h={12} stroke="none"><path d="M0 1h2v2H0zM3 1h9v2H3zM0 5h2v2H0zM3 5h9v2H3zM0 9h2v2H0zM3 9h9v2H3z" fill="#666" /></Icon>} />
            <View />
          </div>
        </div>
      </div>
      <SheetTabs />
      <StatusBar />
      <Taskbar />
    </div>
  );
}
